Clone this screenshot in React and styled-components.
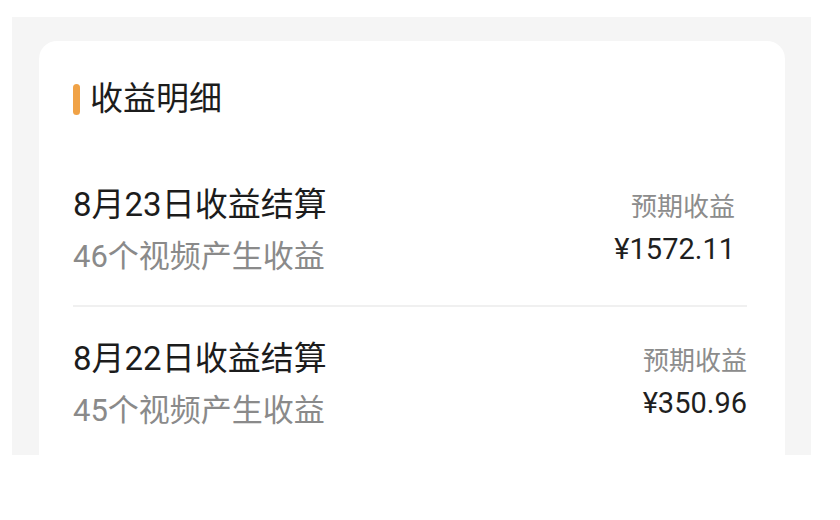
import React from "react";
import styled, { createGlobalStyle } from "styled-components";

const GlobalStyle = createGlobalStyle`
  html, body {
    margin: 0;
    padding: 0;
    background: #ffffff;
  }
  body {
    font-family: Roboto, "Noto Sans CJK SC", sans-serif;
  }
`;

const Backdrop = styled.div`
  margin: 17px 29px 0 12px;
  height: 438px;
  background: #f5f5f5;
  padding: 24px 26px 0 27px;
  box-sizing: border-box;
  overflow: hidden;
`;

const Card = styled.section`
  background: #ffffff;
  border-radius: 18px 18px 0 0;
  padding: 36px 38px 0 34px;
  min-height: 100%;
  box-sizing: border-box;
`;

const Header = styled.div`
  display: flex;
  align-items: center;
  gap: 10px;
  height: 44px;
  margin-bottom: 32px;
`;

const Accent = styled.span`
  width: 7px;
  height: 31px;
  border-radius: 4px;
  background: #f0a246;
`;

const HeaderTitle = styled.h2`
  margin: 0;
  font-size: 33px;
  font-weight: 400;
  line-height: 44px;
  color: #1c1c1c;
`;

const List = styled.div`
  display: flex;
  flex-direction: column;
`;

const Row = styled.div`
  display: flex;
  justify-content: space-between;
  align-items: center;
  padding: 26px 0 22px;
  border-bottom: ${(p) => (p.$last ? "none" : "2px solid #f0f0f0")};
`;

const Info = styled.div`
  display: flex;
  flex-direction: column;
`;

const RowTitle = styled.div`
  font-size: 33px;
  line-height: 52px;
  color: #1c1c1c;
`;

const RowSub = styled.div`
  font-size: 31px;
  line-height: 52px;
  color: #8a8a8a;
`;

const Earnings = styled.div`
  display: flex;
  flex-direction: column;
  align-items: flex-end;
  padding-right: ${(p) => p.$inset || 0}px;
`;

const Label = styled.div`
  font-size: 26px;
  line-height: 36px;
  color: #8c8c8c;
`;

const Amount = styled.div`
  font-size: 29px;
  line-height: 48px;
  color: #1f1f1f;
`;

const items = [
  { date: "8月23日收益结算", count: 46, amount: "¥1572.11", inset: 12 },
  { date: "8月22日收益结算", count: 45, amount: "¥350.96", inset: 0 },
];

export default function App() {
  return (
    <>
      <GlobalStyle />
      <Backdrop>
        <Card>
          <Header>
            <Accent />
            <HeaderTitle>收益明细</HeaderTitle>
          </Header>
          <List>
            {items.map((it, i) => (
              <Row key={it.date} $last={i === items.length - 1}>
                <Info>
                  <RowTitle>{it.date}</RowTitle>
                  <RowSub>{it.count}个视频产生收益</RowSub>
                </Info>
                <Earnings $inset={it.inset}>
                  <Label>预期收益</Label>
                  <Amount>{it.amount}</Amount>
                </Earnings>
              </Row>
            ))}
          </List>
        </Card>
      </Backdrop>
    </>
  );
}
